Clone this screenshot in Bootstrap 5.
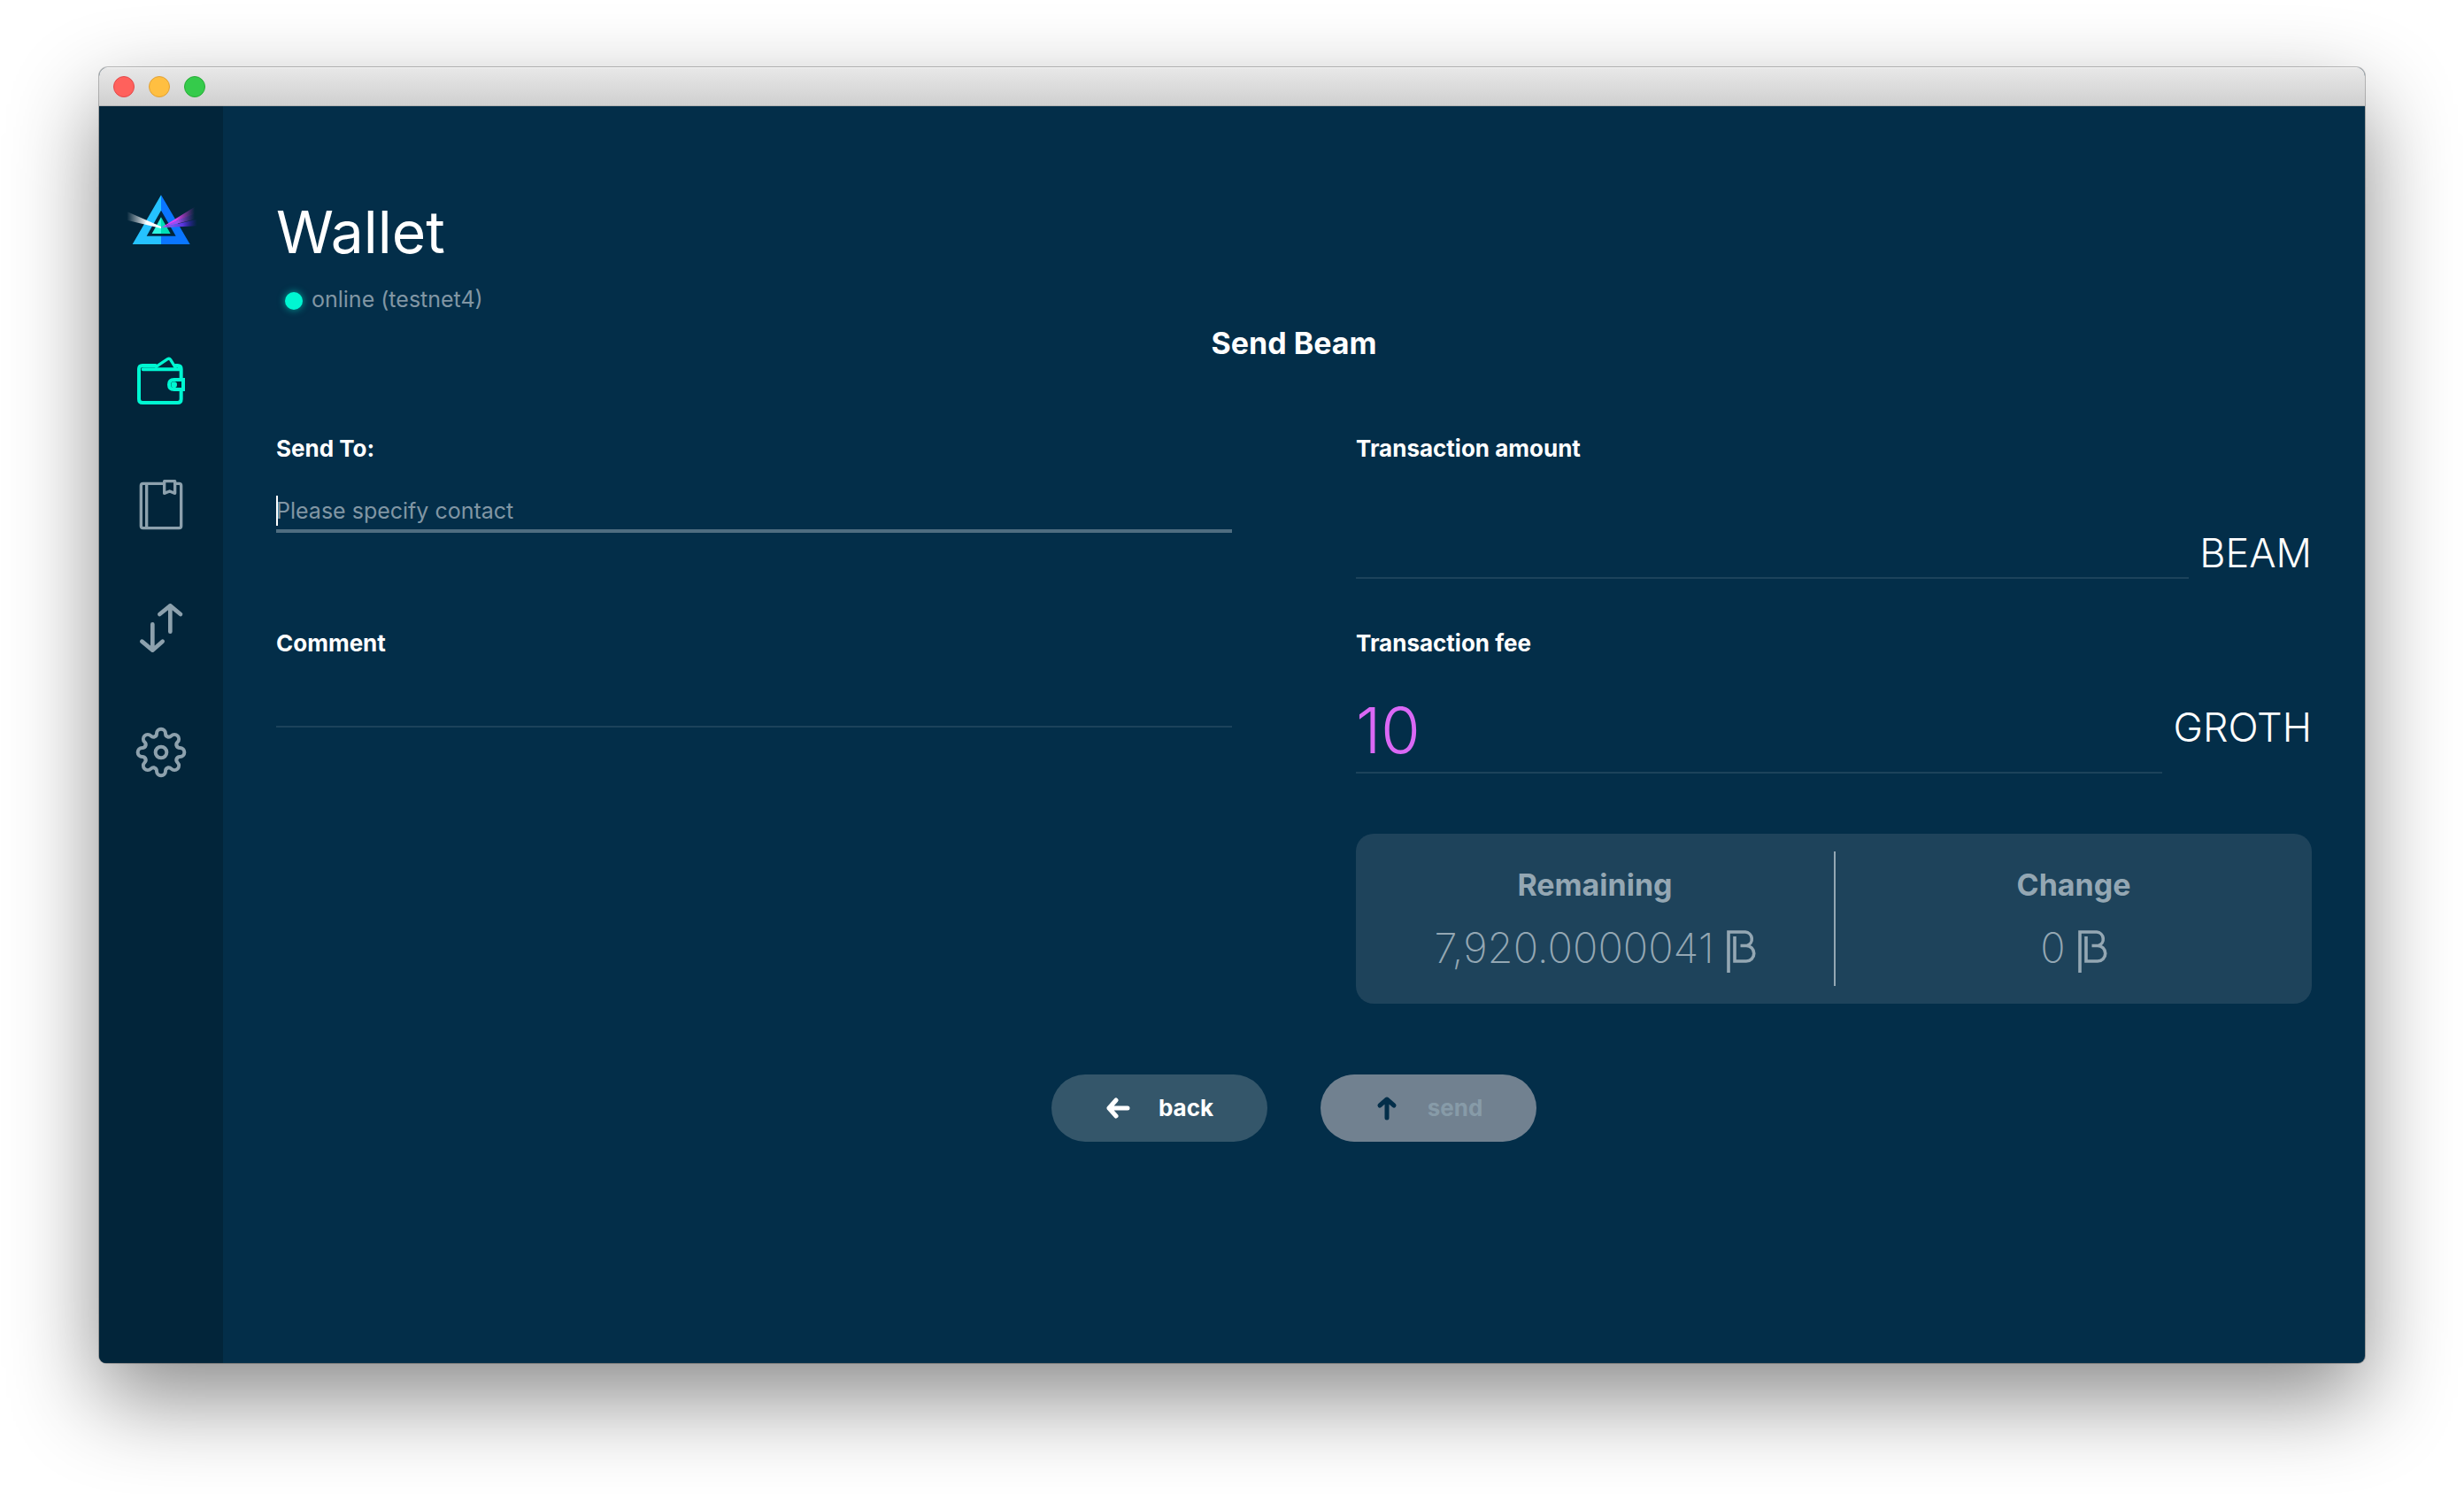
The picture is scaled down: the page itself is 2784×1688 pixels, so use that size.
<!DOCTYPE html>
<html lang="en">
<head>
<meta charset="utf-8">
<meta name="viewport" content="width=device-width, initial-scale=1">
<title>Beam Wallet</title>
<link href="https://cdn.jsdelivr.net/npm/bootstrap@5.3.0/dist/css/bootstrap.min.css" rel="stylesheet">
<style>
  body { font-family: Inter, "Liberation Sans", sans-serif; background: #fff; color: #fff; padding: 76px 112px 148px; }
  .app-window { border-radius: 10px 10px 8px 8px; background: #032e49; box-shadow: 0 0 0 1px rgba(0,0,0,.25), 0 40px 100px rgba(0,0,0,.46); }
  .title-bar { height: 44px; padding: 0 16px; gap: 16px; background: linear-gradient(#e8e8e8, #d0d0d0); border-bottom: 1px solid #b4b4b4; box-shadow: inset 0 1px #f5f5f5; }
  .light { width: 24px; height: 24px; border-radius: 50%; border: 1px solid; padding: 0; }
  .light-close { background: #ff615c; border-color: #e2484a; }
  .light-min { background: #ffbf41; border-color: #e0a035; }
  .light-max { background: #35cb4b; border-color: #27ab36; }
  .side-nav { width: 140px; background: #02253a; }
  .brand { padding: 85px 0 65px; }
  .side-link { height: 140px; color: #8da1ad; }
  .side-link.active { color: #00f6d2; }
  .page { padding: 100px 60px; }
  .page-title { font-size: 66px; line-height: 84px; font-weight: 400; }
  .status { font-size: 25px; line-height: 36px; margin-top: 16px; padding-left: 10px; gap: 10px; color: #8196a4; }
  .status-dot { width: 20px; height: 20px; border-radius: 50%; background: #00f6d2; box-shadow: 0 0 8px rgba(0,246,210,.6); margin-top: 4px; }
  .form-title { font-size: 34px; line-height: 44px; font-weight: 650; margin-top: 10px; margin-bottom: 81px; }
  .send-row { --bs-gutter-x: 140px; }
  .field { min-height: 220px; }
  .field-label { font-size: 26px; line-height: 32px; font-weight: 650; }
  .line-input { font-family: inherit; color: #fff; background: none; border: 0; border-bottom: 2px solid #1c435b; border-radius: 0; outline: 0; padding: 0; width: 100%; min-width: 0; height: 43px; font-size: 25px; line-height: 36px; }
  .line-input::placeholder { color: #8196a4; opacity: 1; }
  .input-wrap { margin-top: 36px; }
  .input-focus { border-bottom: 4px solid #4f6d80; padding-bottom: 3px; }
  .caret { left: 0; top: 1px; width: 2px; height: 34px; background: #fff; }
  .amount { margin-top: 27px; gap: 12px; }
  .input-amount { height: 104px; padding: 14px 0 8px; font-size: 72px; line-height: 80px; font-weight: 300; color: #da68f5; }
  .unit { font-size: 45px; line-height: 58px; font-weight: 350; }
  .totals { margin-top: 11px; height: 192px; border-radius: 20px; background: #1e435b; color: #94a7b3; padding: 20px 0; }
  .totals-part { padding: 16px 0; }
  .totals-part + .totals-part { border-left: 2px solid #94a7b3; }
  .totals-label { font-size: 34px; line-height: 44px; font-weight: 650; }
  .totals-value { font-size: 47px; line-height: 56px; font-weight: 250; gap: 14px; margin-top: 21px; }
  .actions { gap: 60px; margin-top: 80px; }
  .pill { width: 244px; height: 76px; border-radius: 38px; border: 0; font-size: 26px; line-height: 32px; font-weight: 650; color: #fff; background: #34566a; gap: 32px; padding: 0 58px; }
  .pill:disabled { background: #718190; color: #879ba8; opacity: 1; }
</style>
<script src="https://cdn.jsdelivr.net/npm/bootstrap@5.3.0/dist/js/bootstrap.bundle.min.js"></script>
</head>
<body class="min-vh-100 d-flex flex-column">
<svg class="d-none">
  <symbol id="beam-sign" viewBox="0 0 33 48">
    <path d="M2 48V2H21A8 8 0 0 1 23 17.500H15.500M22 17.500A8.500 8.500 0 0 1 22 35H9V7" fill="none" stroke="currentColor" stroke-width="3.600"/>
  </symbol>
</svg>
<div class="app-window flex-grow-1 d-flex flex-column overflow-hidden">
  <header class="title-bar d-flex align-items-center">
    <button class="light light-close" aria-label="Close"></button>
    <button class="light light-min" aria-label="Minimize"></button>
    <button class="light light-max" aria-label="Zoom"></button>
  </header>
  <div class="d-flex flex-grow-1">
    <nav class="side-nav flex-shrink-0 d-flex flex-column">
      <a href="#" class="brand d-flex justify-content-center" aria-label="Beam">
        <svg width="100" height="90" viewBox="6 0 300 270">
          <defs>
            <linearGradient id="ray-in"><stop offset="0" stop-color="#fff" stop-opacity="0"/><stop offset=".6" stop-color="#fff"/></linearGradient>
            <linearGradient id="ray-pink"><stop offset="0" stop-color="#f33cf0"/><stop offset=".45" stop-color="#d944ef"/><stop offset="1" stop-color="#d03ad8" stop-opacity="0"/></linearGradient>
            <linearGradient id="ray-violet"><stop offset="0" stop-color="#b53af0"/><stop offset=".5" stop-color="#9a4df0"/><stop offset="1" stop-color="#8a35d0" stop-opacity="0"/></linearGradient>
            <linearGradient id="ray-blue"><stop offset="0" stop-color="#a06cf5"/><stop offset=".6" stop-color="#5a35e0"/><stop offset="1" stop-color="#3a18c0" stop-opacity="0"/></linearGradient>
          </defs>
          <path d="M156 46V98L107 185H156V213H59Z" fill="#25c2ff"/>
          <path d="M156 46V98L206 185H156V213H254Z" fill="#0a76ff"/>
          <path d="M156 121V177H125Z" fill="#2ff7e0"/>
          <path d="M156 121V177H188Z" fill="#00dfb6"/>
          <path d="M156 159L40 131V102L156 153Z" fill="url(#ray-in)"/>
          <path d="M156 157L270 86V108Z" fill="url(#ray-pink)"/>
          <path d="M156 157L270 107V128Z" fill="url(#ray-violet)"/>
          <path d="M156 157L278 128V151Z" fill="url(#ray-blue)"/>
        </svg>
      </a>
      <a href="#" class="side-link active d-flex align-items-center justify-content-center" aria-label="Wallet">
        <svg width="100" height="100" viewBox="6 0 300 300" fill="none" stroke="currentColor" stroke-width="12" stroke-linejoin="round" stroke-linecap="round">
          <path d="M224 144V111Q224 99 212 99H205M224 186V213Q224 225 212 225H93Q81 225 81 213V111Q81 99 93 99H137M95 112H222"/>
          <path d="M139 103L178 77Q184 73 188 79L204 105" stroke-width="10"/>
          <path d="M231 147V180H200Q183 180 183 163.500T200 147Z" stroke-linejoin="miter"/>
          <circle cx="200" cy="164" r="10" fill="currentColor" stroke="none"/>
        </svg>
      </a>
      <a href="#" class="side-link d-flex align-items-center justify-content-center" aria-label="Addresses">
        <svg width="100" height="100" viewBox="6 0 300 300" fill="none" stroke="currentColor" stroke-width="10" stroke-linejoin="round">
          <path d="M163 79H95Q88 79 88 86V223Q88 230 95 230H217Q224 230 224 223V86Q224 79 217 79H206M107 79V230"/>
          <path d="M167 71H203V112L185 105L167 112Z"/>
        </svg>
      </a>
      <a href="#" class="side-link d-flex align-items-center justify-content-center" aria-label="Transactions">
        <svg width="100" height="100" viewBox="6 420 300 300" fill="none" stroke="currentColor" stroke-width="14" stroke-linejoin="round" stroke-linecap="round">
          <path d="M187 581V493M151 522L187 493L222 522M127 556V643M91 614L127 644L161 614"/>
        </svg>
      </a>
      <a href="#" class="side-link d-flex align-items-center justify-content-center" aria-label="Settings">
        <svg width="100" height="100" viewBox="-150 -150 300 300" fill="none" stroke="currentColor" stroke-width="12" stroke-linejoin="round" stroke-linecap="round">
          <defs><path id="tooth" d="M-22 -53Q-15 -55 -15 -64A15 15 0 0 1 15 -64Q15 -55 22 -53"/></defs>
          <use href="#tooth"/><use href="#tooth" transform="rotate(45)"/><use href="#tooth" transform="rotate(90)"/><use href="#tooth" transform="rotate(135)"/>
          <use href="#tooth" transform="rotate(180)"/><use href="#tooth" transform="rotate(225)"/><use href="#tooth" transform="rotate(270)"/><use href="#tooth" transform="rotate(315)"/>
          <circle r="19"/>
        </svg>
      </a>
    </nav>
    <main class="page flex-grow-1">
      <h1 class="page-title mb-0">Wallet</h1>
      <div class="status d-flex align-items-center"><span class="status-dot"></span><span>online (testnet4)</span></div>
      <form>
        <h2 class="form-title text-center">Send Beam</h2>
        <div class="row send-row">
          <div class="col-6">
            <div class="field">
              <label class="field-label d-block" for="send-to">Send To:</label>
              <div class="input-wrap position-relative">
                <input class="line-input input-focus d-block" id="send-to" type="text" placeholder="Please specify contact">
                <span class="caret position-absolute"></span>
              </div>
            </div>
            <div class="field">
              <label class="field-label d-block" for="comment">Comment</label>
              <div class="input-wrap"><input class="line-input d-block" id="comment" type="text"></div>
            </div>
          </div>
          <div class="col-6">
            <div class="field">
              <label class="field-label d-block" for="amount">Transaction amount</label>
              <div class="amount d-flex align-items-end">
                <input class="line-input input-amount flex-grow-1" id="amount" type="text"><span class="unit">BEAM</span>
              </div>
            </div>
            <div class="field">
              <label class="field-label d-block" for="fee">Transaction fee</label>
              <div class="amount d-flex align-items-center">
                <input class="line-input input-amount flex-grow-1" id="fee" type="text" value="10"><span class="unit">GROTH</span>
              </div>
            </div>
            <div class="totals d-flex text-center">
              <div class="totals-part w-50">
                <div class="totals-label">Remaining</div>
                <div class="totals-value d-flex justify-content-center align-items-end"><span>7,920.0000041</span><svg width="33" height="48"><use href="#beam-sign"/></svg></div>
              </div>
              <div class="totals-part w-50">
                <div class="totals-label">Change</div>
                <div class="totals-value d-flex justify-content-center align-items-end"><span>0</span><svg width="33" height="48"><use href="#beam-sign"/></svg></div>
              </div>
            </div>
          </div>
        </div>
        <div class="actions d-flex justify-content-center">
          <button type="button" class="pill d-flex align-items-center justify-content-center">
            <svg width="28" height="28" viewBox="0 0 28 28" fill="none" stroke="#fff" stroke-width="5" stroke-linecap="round" stroke-linejoin="round"><path d="M25 14H4M12 5L4 14L12 23"/></svg>back
          </button>
          <button type="submit" class="pill d-flex align-items-center justify-content-center" disabled>
            <svg width="28" height="28" viewBox="0 0 28 28" fill="none" stroke="#032e49" stroke-width="5" stroke-linecap="round" stroke-linejoin="round"><path d="M14 25V4M6 11L14 4L22 11"/></svg>send
          </button>
        </div>
      </form>
    </main>
  </div>
</div>
</body>
</html>
